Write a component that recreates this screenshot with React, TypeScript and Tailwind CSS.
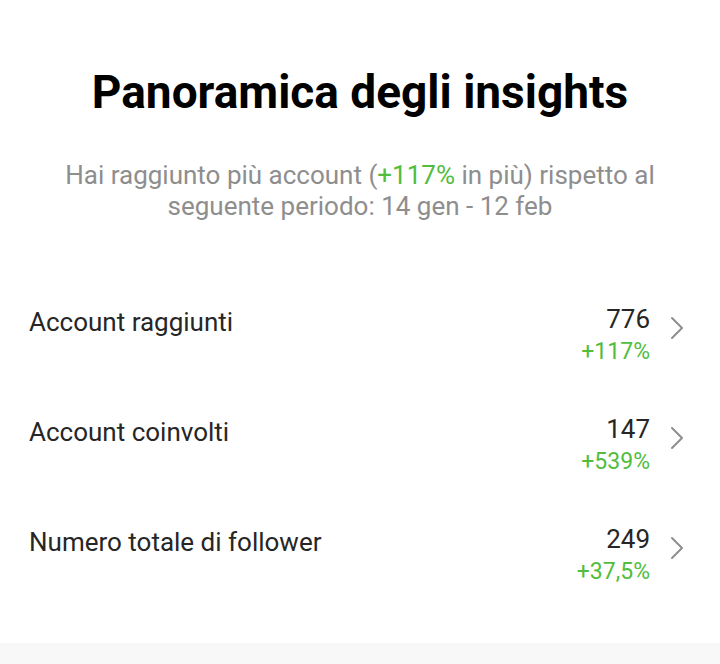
import React from 'react';

const rows = [
    { label: 'Account raggiunti', value: '776', delta: '+117%' },
    { label: 'Account coinvolti', value: '147', delta: '+539%' },
    { label: 'Numero totale di follower', value: '249', delta: '+37,5%' },
];

function Chevron() {
    return (
        <svg width="16" height="24" viewBox="0 0 16 24" fill="none" className="shrink-0">
            <path d="M3 2 L13 12 L3 22" stroke="#8e8e8e" strokeWidth="2" strokeLinecap="round" strokeLinejoin="round" />
        </svg>
    );
}

export default function App() {
    return (
        <div className="w-[720px] h-[664px] bg-white flex flex-col overflow-hidden" style={{ fontFamily: 'Roboto, "Noto Sans", sans-serif' }}>
            {/* Header */}
            <div className="pt-[64px] text-center">
                <h1 className="text-[46px] leading-[56px] font-bold text-black">Panoramica degli insights</h1>
                <p className="mt-[40px] mx-auto max-w-[600px] text-[26px] leading-[31px] text-[#8e8e8e]">
                    Hai raggiunto più account (<span className="text-[#52bd3c]">+117%</span> in più) rispetto al seguente periodo: 14 gen - 12 feb
                </p>
            </div>

            {/* Metrics */}
            <div className="mt-[83px] flex flex-col pl-[29px] pr-[35px]">
                {rows.map((row) => (
                    <div key={row.label} className="flex items-start justify-between h-[110px]">
                        <span className="text-[26px] leading-[34px] text-[#262626]">{row.label}</span>
                        <div className="flex items-start gap-[19px]">
                            <div className="flex flex-col items-end">
                                <span className="text-[26px] leading-[29px] text-[#262626]">{row.value}</span>
                                <span className="text-[23px] leading-[36px] text-[#52bd3c]">{row.delta}</span>
                            </div>
                            <div className="pt-[11px]">
                                <Chevron />
                            </div>
                        </div>
                    </div>
                ))}
            </div>

            <div className="flex-1" />
            <div className="h-[21px] bg-[#f8f8f8]" />
        </div>
    );
}
